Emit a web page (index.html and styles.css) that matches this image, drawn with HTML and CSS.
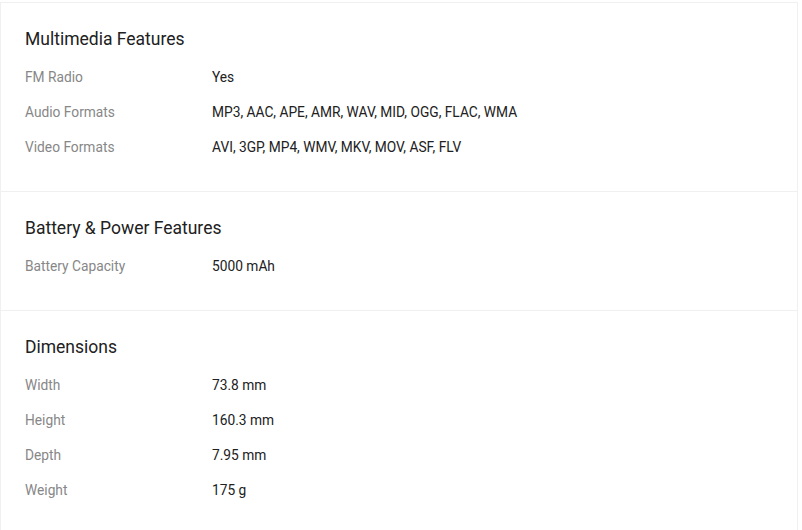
FILE: index.html
```html
<!DOCTYPE html>
<html>
<head>
    <title>Specifications</title>
    <link rel="stylesheet" href="styles.css">
</head>
<body>
    <div class="specs">
        <div class="section">
            <h2 class="section-title">Multimedia Features</h2>
            <div class="row"><div class="label">FM Radio</div><div class="value">Yes</div></div>
            <div class="row"><div class="label">Audio Formats</div><div class="value">MP3, AAC, APE, AMR, WAV, MID, OGG, FLAC, WMA</div></div>
            <div class="row"><div class="label">Video Formats</div><div class="value">AVI, 3GP, MP4, WMV, MKV, MOV, ASF, FLV</div></div>
        </div>
        <div class="section">
            <h2 class="section-title">Battery &amp; Power Features</h2>
            <div class="row"><div class="label">Battery Capacity</div><div class="value">5000 mAh</div></div>
        </div>
        <div class="section">
            <h2 class="section-title">Dimensions</h2>
            <div class="row"><div class="label">Width</div><div class="value">73.8 mm</div></div>
            <div class="row"><div class="label">Height</div><div class="value">160.3 mm</div></div>
            <div class="row"><div class="label">Depth</div><div class="value">7.95 mm</div></div>
            <div class="row"><div class="label">Weight</div><div class="value">175 g</div></div>
        </div>
    </div>
</body>
</html>
```

FILE: styles.css
```css
body {
    margin: 0;
    padding: 0;
    font-family: Roboto, Arial, sans-serif;
    background-color: #fff;
}

.specs {
    width: 796px;
    margin-top: 2px;
    border: 1px solid #f0f0f0;
    border-bottom: none;
}

.section {
    padding: 24px 24px 26px;
    border-bottom: 1px solid #f0f0f0;
}

.section-title {
    margin: 0 0 9px;
    font-size: 17.5px;
    font-weight: 400;
    line-height: 24px;
    color: #212121;
}

.row {
    display: flex;
    font-size: 13.75px;
    line-height: 35px;
}

.label {
    width: 25%;
    flex-shrink: 0;
    color: #878787;
}

.value {
    color: #212121;
}
```
